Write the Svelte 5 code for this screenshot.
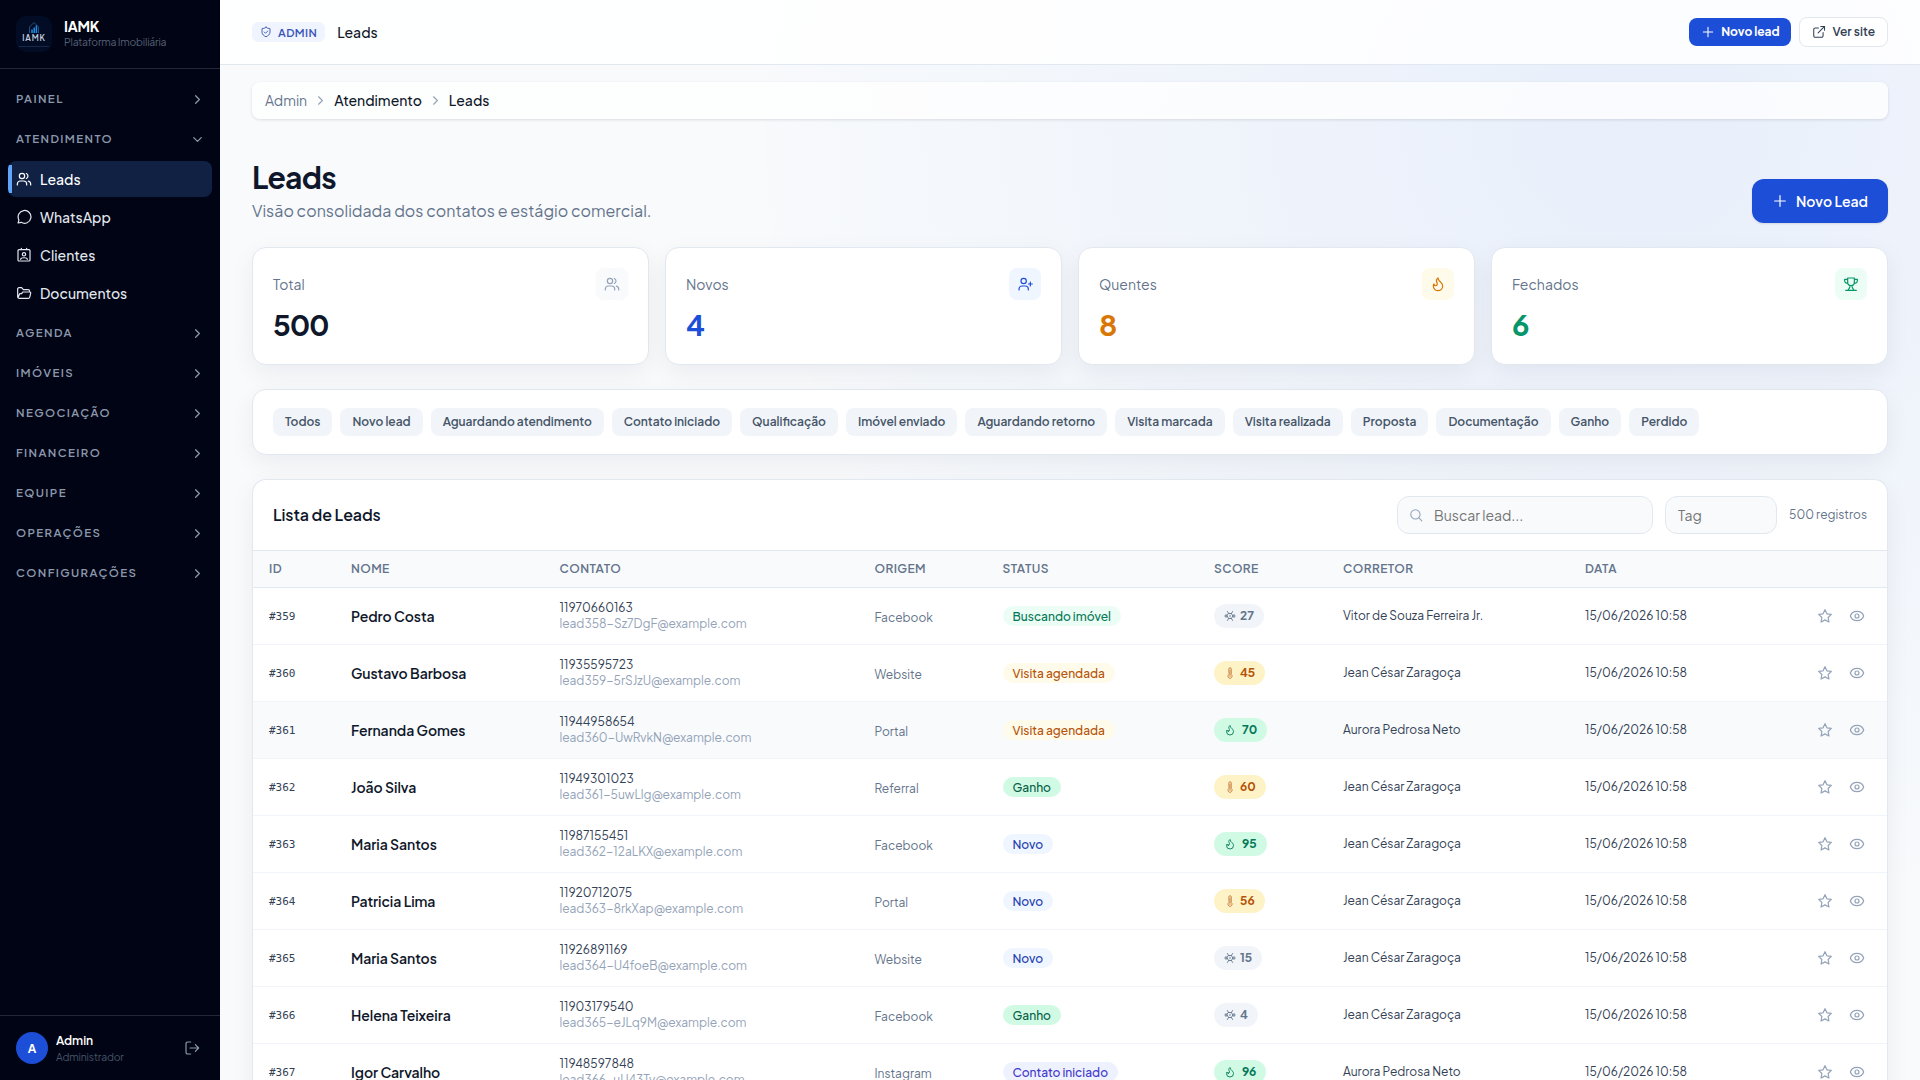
<script lang="ts">
	type Tone = 'cold' | 'warm' | 'hot';

	type Lead = {
		id: number;
		name: string;
		phone: string;
		email: string;
		origin: string;
		status: string;
		score: number;
		broker: string;
	};

	const navItems = [
		{ label: 'Leads', icon: 'users' },
		{ label: 'WhatsApp', icon: 'chat' },
		{ label: 'Clientes', icon: 'contact' },
		{ label: 'Documentos', icon: 'folder' }
	];

	const sections = ['Agenda', 'Imóveis', 'Negociação', 'Financeiro', 'Equipe', 'Operações', 'Configurações'];

	const stats = [
		{ label: 'Total', value: 500, icon: 'users', tone: 'slate' },
		{ label: 'Novos', value: 4, icon: 'userPlus', tone: 'blue' },
		{ label: 'Quentes', value: 8, icon: 'flame', tone: 'amber' },
		{ label: 'Fechados', value: 6, icon: 'trophy', tone: 'green' }
	];

	const filters = [
		'Todos',
		'Novo lead',
		'Aguardando atendimento',
		'Contato iniciado',
		'Qualificação',
		'Imóvel enviado',
		'Aguardando retorno',
		'Visita marcada',
		'Visita realizada',
		'Proposta',
		'Documentação',
		'Ganho',
		'Perdido'
	];

	const statusClass: Record<string, string> = {
		'Buscando imóvel': 'searching',
		'Visita agendada': 'visit',
		Ganho: 'won',
		Novo: 'new',
		'Contato iniciado': 'contacted'
	};

	const jean = 'Jean César Zaragoça';
	const aurora = 'Aurora Pedrosa Neto';

	const leads: Lead[] = [
		{ id: 359, name: 'Pedro Costa', phone: '11970660163', email: 'lead358-Sz7DgF@example.com', origin: 'Facebook', status: 'Buscando imóvel', score: 27, broker: 'Vitor de Souza Ferreira Jr.' },
		{ id: 360, name: 'Gustavo Barbosa', phone: '11935595723', email: 'lead359-5rSJzU@example.com', origin: 'Website', status: 'Visita agendada', score: 45, broker: jean },
		{ id: 361, name: 'Fernanda Gomes', phone: '11944958654', email: 'lead360-UwRvkN@example.com', origin: 'Portal', status: 'Visita agendada', score: 70, broker: aurora },
		{ id: 362, name: 'João Silva', phone: '11949301023', email: 'lead361-5uwLlg@example.com', origin: 'Referral', status: 'Ganho', score: 60, broker: jean },
		{ id: 363, name: 'Maria Santos', phone: '11987155451', email: 'lead362-12aLKX@example.com', origin: 'Facebook', status: 'Novo', score: 95, broker: jean },
		{ id: 364, name: 'Patricia Lima', phone: '11920712075', email: 'lead363-8rkXap@example.com', origin: 'Portal', status: 'Novo', score: 56, broker: jean },
		{ id: 365, name: 'Maria Santos', phone: '11926891169', email: 'lead364-U4foeB@example.com', origin: 'Website', status: 'Novo', score: 15, broker: jean },
		{ id: 366, name: 'Helena Teixeira', phone: '11903179540', email: 'lead365-eJLq9M@example.com', origin: 'Facebook', status: 'Ganho', score: 4, broker: jean },
		{ id: 367, name: 'Igor Carvalho', phone: '11948597848', email: 'lead366-uU43Tv@example.com', origin: 'Instagram', status: 'Contato iniciado', score: 96, broker: aurora }
	];

	let search = $state('');
	let tag = $state('');
	let highlighted = $state(361);

	function tone(score: number): Tone {
		if (score >= 70) return 'hot';
		return score >= 40 ? 'warm' : 'cold';
	}

	const toneIcon: Record<Tone, string> = { cold: 'snow', warm: 'thermometer', hot: 'flame' };

	// Stroke paths on a 24x24 grid.
	const icons: Record<string, string> = {
		users: 'M9 3.5a4 4 0 1 0 0 8a4 4 0 0 0 0-8zM2 21v-1.5A4.5 4.5 0 0 1 6.5 15h5A4.5 4.5 0 0 1 16 19.5V21M15.5 3.8a4 4 0 0 1 0 7.4M18.5 15.2a4.5 4.5 0 0 1 3.5 4.3V21',
		userPlus: 'M10 3.5a4 4 0 1 0 0 8a4 4 0 0 0 0-8zM3 21v-1.5A4.5 4.5 0 0 1 7.5 15h5A4.5 4.5 0 0 1 17 19.5V21M20 9v6M17 12h6',
		chat: 'M3.2 21l1.2-4.6A9.6 9.6 0 1 1 7.8 20z',
		contact: 'M4.5 4h15A1.5 1.5 0 0 1 21 5.5v14a1.5 1.5 0 0 1-1.5 1.5h-15A1.5 1.5 0 0 1 3 19.5v-14A1.5 1.5 0 0 1 4.5 4zM8 2v2M16 2v2M12 8.5a2.5 2.5 0 1 0 0 5a2.5 2.5 0 0 0 0-5zM7 18.5c0-3.2 10-3.2 10 0',
		folder: 'M5 20h13.5a2 2 0 0 0 2-1.5L22 12.5a1.5 1.5 0 0 0-1.5-2H10L8.5 13H5.5L3 19M5 20a2.5 2.5 0 0 1-2.5-2.5V6A2 2 0 0 1 4.5 4h4L11 7h7a2.5 2.5 0 0 1 2.5 2.5v1',
		flame: 'M8.5 14.5A2.5 2.5 0 0 0 11 12c0-1.38-.5-2-1-3-1.07-2.14-.22-4.05 2-6 .5 2.5 2 4.9 4 6.5s3 3.5 3 5.5a7 7 0 1 1-14 0c0-1.15.43-2.29 1-3a2.5 2.5 0 0 0 2.5 2.5z',
		trophy: 'M7 3h10v6.5a5 5 0 0 1-10 0zM7 5H2.5v2.5A3.5 3.5 0 0 0 7 10.5M17 5h4.5v2.5a3.5 3.5 0 0 1-4.5 3M10.5 14.5C10.5 18 9 19 7.5 21M13.5 14.5C13.5 18 15 19 16.5 21M4 21.5h16',
		snow: 'M1.5 12h5M17.500 12h5M6.8 3l2.400 4M14.800 17l2.400 4M17.2 3l-2.400 4M9.200 17l-2.400 4M9.2 7h5.6l2.9 5l-2.9 5H9.2L6.3 12zM12 10.500v3M4 9v6M20 9v6',
		thermometer: 'M9.5 4a2.5 2.5 0 0 1 5 0v11a4.2 4.2 0 1 1-5 0zM12 6v10M12 17.5v1.5',
		shield: 'M12 2.5c2.5 2 5 2.5 8 2.8V12c0 5-4 8-8 9.5C8 20 4 17 4 12V5.3c3-.3 5.5-.8 8-2.8zM8.5 12l2.5 2.5l4.5-4.5',
		plus: 'M12 4v16M4 12h16',
		external: 'M11 5H5.5A2.5 2.5 0 0 0 3 7.5v11A2.5 2.5 0 0 0 5.5 21h11a2.5 2.5 0 0 0 2.5-2.5V13M15 2.5h6.5V9M21.5 2.5L10.5 13.5',
		right: 'M9 6l6 6l-6 6',
		down: 'M6 9l6 6l6-6',
		search: 'M11 3a8 8 0 1 0 0 16a8 8 0 0 0 0-16zM17 17l5 5',
		star: 'M12 2.5l2.9 6.2l6.6.9l-4.8 4.7l1.2 6.7L12 17.8L6.1 21l1.2-6.7L2.5 9.6l6.6-.9z',
		eye: 'M2 12C3.5 7.5 7.5 5 12 5s8.5 2.5 10 7c-1.5 4.5-5.5 7-10 7S3.5 16.5 2 12zM12 9a3 3 0 1 0 0 6a3 3 0 0 0 0-6z',
		logout: 'M10 3H5.5A2.5 2.5 0 0 0 3 5.5v13A2.5 2.5 0 0 0 5.5 21H10M9 12h12.5M17 7l5 5l-5 5'
	};
</script>

{#snippet icon(name: string, size = 16, stroke = 1.8)}
	<svg
		width={size}
		height={size}
		viewBox="0 0 24 24"
		fill="none"
		stroke="currentColor"
		stroke-width={stroke}
		stroke-linecap="round"
		stroke-linejoin="round"
		aria-hidden="true"
	>
		<path d={icons[name]} />
	</svg>
{/snippet}

<div class="app">
	<aside class="sidebar">
		<div class="brand">
			<div class="logo">
				<svg width="14" height="13" viewBox="0 0 14 13" aria-hidden="true">
					<path d="M2.5 12V6L7 1.5L11.5 6V12" fill="none" stroke="#24568c" stroke-width="0.9" />
					<path d="M5 12V8.5M7.2 12V6.5M9.4 12V4.5" stroke="#1d8fe8" stroke-width="1.5" />
				</svg>
				<span class="logo-name">IAMK</span>
				<span class="logo-line"></span>
			</div>
			<div class="brand-text">
				<strong>IAMK</strong>
				<span>Plataforma Imobiliária</span>
			</div>
		</div>

		<nav class="nav">
			<button class="section" type="button"><span>Painel</span>{@render icon('right', 15, 2)}</button>
			<button class="section" type="button"><span>Atendimento</span>{@render icon('down', 15, 2)}</button>
			<div class="nav-group">
				{#each navItems as item, i}
					<a class="nav-item" class:active={i === 0} href="#{item.icon}">
						{@render icon(item.icon, 16)}
						<span>{item.label}</span>
					</a>
				{/each}
			</div>
			{#each sections as section}
				<button class="section" type="button"><span>{section}</span>{@render icon('right', 15, 2)}</button>
			{/each}
		</nav>

		<div class="account">
			<div class="avatar">A</div>
			<div class="account-text">
				<strong>Admin</strong>
				<span>Administrador</span>
			</div>
			<button class="logout" type="button" aria-label="Sair">{@render icon('logout', 16)}</button>
		</div>
	</aside>

	<div class="page">
		<header class="topbar">
			<span class="role">{@render icon('shield', 12)}<span>ADMIN</span></span>
			<span class="topbar-title">Leads</span>
			<div class="topbar-actions">
				<button class="btn-new-small" type="button">{@render icon('plus', 14)}<span>Novo lead</span></button>
				<a class="btn-site" href="#site">{@render icon('external', 14)}<span>Ver site</span></a>
			</div>
		</header>

		<main class="content">
			<nav class="breadcrumb" aria-label="Breadcrumb">
				<span class="muted">Admin</span>
				{@render icon('right', 15)}
				<span>Atendimento</span>
				{@render icon('right', 15)}
				<span>Leads</span>
			</nav>

			<div class="heading">
				<div>
					<h1>Leads</h1>
					<p>Visão consolidada dos contatos e estágio comercial.</p>
				</div>
				<button class="btn-new" type="button">{@render icon('plus', 16)}<span>Novo Lead</span></button>
			</div>

			<div class="stats">
				{#each stats as stat}
					<div class="card stat {stat.tone}">
						<div class="stat-top">
							<span class="stat-label">{stat.label}</span>
							<span class="stat-icon">{@render icon(stat.icon, 16)}</span>
						</div>
						<div class="stat-value">{stat.value}</div>
					</div>
				{/each}
			</div>

			<div class="card filters">
				{#each filters as filter}
					<button class="chip" type="button">{filter}</button>
				{/each}
			</div>

			<section class="card list">
				<div class="list-header">
					<h2>Lista de Leads</h2>
					<label class="field search">
						{@render icon('search', 14)}
						<input bind:value={search} placeholder="Buscar lead..." />
					</label>
					<label class="field tag">
						<input bind:value={tag} placeholder="Tag" />
					</label>
					<span class="count">500 registros</span>
				</div>

				<table>
					<colgroup>
						<col class="c-id" />
						<col class="c-name" />
						<col class="c-contact" />
						<col class="c-origin" />
						<col class="c-status" />
						<col class="c-score" />
						<col class="c-broker" />
						<col class="c-date" />
						<col />
					</colgroup>
					<thead>
						<tr>
							<th>ID</th>
							<th>Nome</th>
							<th>Contato</th>
							<th>Origem</th>
							<th>Status</th>
							<th>Score</th>
							<th>Corretor</th>
							<th>Data</th>
							<th></th>
						</tr>
					</thead>
					<tbody>
						{#each leads as lead (lead.id)}
							<tr class:hover={lead.id === highlighted} onmouseenter={() => (highlighted = lead.id)}>
								<td class="id">#{lead.id}</td>
								<td class="name">{lead.name}</td>
								<td>
									<div class="phone">{lead.phone}</div>
									<div class="email">{lead.email}</div>
								</td>
								<td class="origin">{lead.origin}</td>
								<td><span class="status {statusClass[lead.status]}">{lead.status}</span></td>
								<td>
									<span class="score {tone(lead.score)}">
										{@render icon(toneIcon[tone(lead.score)], 12)}
										<span>{lead.score}</span>
									</span>
								</td>
								<td class="broker">{lead.broker}</td>
								<td class="date">15/06/2026 10:58</td>
								<td>
									<div class="row-actions">
										<button type="button" aria-label="Favoritar">{@render icon('star', 16)}</button>
										<button type="button" aria-label="Ver lead">{@render icon('eye', 16)}</button>
									</div>
								</td>
							</tr>
						{/each}
					</tbody>
				</table>
			</section>
		</main>
	</div>
</div>

<style>
	:global(body) {
		margin: 0;
		background: #f8fafc;
	}

	.app {
		display: grid;
		grid-template-columns: 220px minmax(0, 1fr);
		grid-template-rows: 100vh;
		height: 100vh;
		overflow: hidden;
		font-family: 'Plus Jakarta Sans', Inter, 'Open Sans', sans-serif;
		font-size: 14px;
		color: #0f172a;
		background:
			radial-gradient(ellipse 900px 800px at 1640px 130px, rgba(37, 99, 235, 0.075), transparent),
			#f8fafc;
	}

	.app * {
		box-sizing: border-box;
	}

	button {
		font: inherit;
		border: 0;
		padding: 0;
		background: none;
		cursor: pointer;
	}

	a {
		text-decoration: none;
	}

	svg {
		display: block;
		flex: none;
	}

	/* Sidebar */
	.sidebar {
		display: flex;
		flex-direction: column;
		background: #010414;
		color: #fff;
	}

	.brand {
		display: flex;
		align-items: center;
		gap: 12px;
		height: 69px;
		padding: 0 16px;
		border-bottom: 1px solid #232736;
	}

	.logo {
		display: flex;
		flex-direction: column;
		align-items: center;
		width: 36px;
		height: 36px;
		padding-top: 5px;
		border-radius: 10px;
		background: #020c24;
	}

	.logo-name {
		font-size: 8px;
		line-height: 8px;
		font-weight: 600;
		letter-spacing: 0.8px;
		color: #c3cddb;
	}

	.logo-line {
		width: 30px;
		height: 1px;
		margin-top: 4px;
		background: #15294a;
	}

	.brand-text,
	.account-text {
		display: flex;
		flex-direction: column;
	}

	.brand-text {
		padding-bottom: 1px;
	}

	.brand-text strong {
		font-size: 14px;
		line-height: 17px;
		font-weight: 700;
		letter-spacing: -0.2px;
	}

	.brand-text span {
		font-size: 10.4px;
		line-height: 14px;
		letter-spacing: -0.2px;
		color: #566176;
	}

	.nav {
		flex: 1;
		padding: 10px 8px 0;
	}

	.section {
		display: flex;
		align-items: center;
		justify-content: space-between;
		width: 100%;
		height: 40px;
		padding: 0 7px 0 8px;
		font-size: 11.5px;
		font-weight: 600;
		letter-spacing: 0.12em;
		text-transform: uppercase;
		color: #8b98ac;
	}

	.section span {
		padding-bottom: 2px;
	}

	.nav-group {
		display: flex;
		flex-direction: column;
		gap: 2px;
		padding: 2px 0;
	}

	.nav-item {
		display: flex;
		align-items: center;
		gap: 8px;
		height: 36px;
		padding: 0 8px;
		border-radius: 8px;
		font-weight: 500;
		color: #e2e8f0;
	}

	.nav-item.active {
		color: #fff;
		background: linear-gradient(90deg, #60a5fa 4px, transparent 4px) 0 4px / 4px 28px no-repeat, #102144;
	}

	.account {
		display: flex;
		align-items: center;
		gap: 8px;
		height: 65px;
		padding: 0 20px 0 16px;
		border-top: 1px solid #232736;
	}

	.avatar {
		display: grid;
		place-items: center;
		width: 32px;
		height: 32px;
		border-radius: 50%;
		background: #1d4ed8;
		font-size: 12px;
		font-weight: 700;
	}

	.account-text {
		flex: 1;
	}

	.account-text strong {
		font-size: 12px;
		line-height: 16px;
		font-weight: 600;
	}

	.account-text span {
		font-size: 10.4px;
		line-height: 15px;
		letter-spacing: -0.15px;
		color: #475569;
	}

	.logout {
		color: #8b98ac;
	}

	/* Topbar */
	.page {
		min-width: 0;
	}

	.topbar {
		display: flex;
		align-items: center;
		height: 65px;
		padding: 0 32px;
		border-bottom: 1px solid #e2e8f0;
		background: rgba(255, 255, 255, 0.85);
	}

	.role {
		display: flex;
		align-items: center;
		gap: 6px;
		height: 20px;
		padding: 0 8px;
		border-radius: 6px;
		font-size: 11.2px;
		line-height: 18px;
		font-weight: 600;
		letter-spacing: 0.4px;
		color: #3b55b8;
		background: #eff4ff;
	}

	.topbar-title {
		margin-left: 12px;
		font-weight: 500;
	}

	.topbar-actions {
		display: flex;
		align-items: center;
		gap: 8px;
		margin-left: auto;
	}

	.btn-new-small,
	.btn-site {
		display: flex;
		align-items: center;
		gap: 6px;
		border-radius: 8px;
		font-size: 12px;
		line-height: 26px;
		font-weight: 600;
	}

	.btn-new-small {
		height: 28px;
		padding: 0 12px;
		font-weight: 700;
		letter-spacing: -0.05px;
		color: #fff;
		background: #1d4ed8;
	}

	.btn-site {
		height: 30px;
		padding: 0 12px;
		border: 1px solid #e2e8f0;
		color: #334155;
		background: #fff;
	}

	/* Content */
	.content {
		padding: 17px 32px 0;
	}

	.breadcrumb {
		display: flex;
		align-items: center;
		gap: 6px;
		height: 37px;
		padding: 0 13px 1px;
		border-radius: 8px;
		font-weight: 500;
		background: rgba(255, 255, 255, 0.75);
		box-shadow: 0 1px 3px rgba(15, 23, 42, 0.12);
	}

	.breadcrumb svg {
		color: #94a3b8;
	}

	.breadcrumb .muted {
		font-weight: 400;
		color: #64748b;
	}

	.heading {
		display: flex;
		justify-content: space-between;
		align-items: flex-end;
		margin: 38px 0 24px;
	}

	h1 {
		margin: 0 0 2px;
		font-size: 30px;
		line-height: 40px;
		font-weight: 700;
		letter-spacing: -0.025em;
	}

	.heading p {
		margin: 0;
		font-size: 16px;
		line-height: 24px;
		color: #64748b;
	}

	.btn-new {
		display: flex;
		align-items: center;
		gap: 8px;
		height: 44px;
		padding: 0 20px;
		border-radius: 12px;
		font-weight: 600;
		color: #fff;
		background: #1d4ed8;
		box-shadow: 0 1px 2px rgba(15, 23, 42, 0.12);
	}

	.card {
		border: 1px solid #e2e8f0;
		border-radius: 14px;
		background: #fff;
		box-shadow: 0 8px 24px rgba(15, 23, 42, 0.06);
	}

	.stats {
		display: grid;
		grid-template-columns: repeat(4, 1fr);
		gap: 16px;
		margin-bottom: 24px;
	}

	.stat {
		height: 118px;
		padding: 20px;
	}

	.stat-top {
		display: flex;
		align-items: center;
		justify-content: space-between;
	}

	.stat-label {
		color: #64748b;
	}

	.stat-icon {
		display: grid;
		place-items: center;
		width: 32px;
		height: 32px;
		border-radius: 8px;
	}

	.stat-value {
		margin-top: 5px;
		font-size: 29px;
		line-height: 38px;
		font-weight: 700;
		letter-spacing: -1.2px;
	}

	.slate .stat-icon { color: #94a3b8; background: #f8fafc; }
	.blue .stat-value { color: #1d4ed8; }
	.blue .stat-icon { color: #1d4ed8; background: #eff6ff; }
	.amber .stat-value { color: #d97706; }
	.amber .stat-icon { color: #d97706; background: #fffbeb; }
	.green .stat-value { color: #059669; }
	.green .stat-icon { color: #059669; background: #ecfdf5; }

	.filters {
		display: flex;
		gap: 8px;
		height: 66px;
		padding: 18px 20px;
		margin-bottom: 24px;
	}

	.chip {
		height: 28px;
		padding: 0 12px;
		border-radius: 8px;
		font-size: 12px;
		line-height: 26px;
		font-weight: 600;
		white-space: nowrap;
		color: #475569;
		background: #f1f5f9;
	}

	.list {
		overflow: hidden;
		border-radius: 14px 14px 0 0;
		border-bottom: 0;
	}

	.list-header {
		display: flex;
		align-items: center;
		gap: 12px;
		height: 71px;
		padding: 0 20px;
		border-bottom: 1px solid #e2e8f0;
	}

	h2 {
		flex: 1;
		margin: 0;
		padding-bottom: 1px;
		font-size: 16px;
		font-weight: 600;
		letter-spacing: -0.1px;
	}

	.field {
		display: flex;
		align-items: center;
		gap: 11px;
		height: 38px;
		padding: 0 12px;
		border: 1px solid #e2e8f0;
		border-radius: 12px;
		color: #94a3b8;
		background: #f8fafc;
	}

	.search {
		width: 256px;
		padding-left: 11px;
	}

	.tag {
		width: 112px;
	}

	.field input {
		width: 100%;
		min-width: 0;
		padding: 0;
		border: 0;
		outline: 0;
		font: inherit;
		color: #0f172a;
		background: none;
	}

	.field input::placeholder {
		color: #757575;
	}

	.count {
		padding-bottom: 1px;
		font-size: 12px;
		color: #64748b;
	}

	/* Table */
	table {
		width: 100%;
		table-layout: fixed;
		border-collapse: separate;
		border-spacing: 0;
	}

	.c-id { width: 82px; }
	.c-name { width: 208.5px; }
	.c-contact { width: 315px; }
	.c-origin { width: 128px; }
	.c-status { width: 211.5px; }
	.c-score { width: 129px; }
	.c-broker { width: 242px; }
	.c-date { width: 170px; }

	th {
		height: 37px;
		padding: 0 16px 1px;
		border-bottom: 1px solid #e2e8f0;
		text-align: left;
		text-transform: uppercase;
		font-size: 12px;
		font-weight: 600;
		letter-spacing: 0.4px;
		color: #64748b;
		background: #f8fafc;
	}

	td {
		height: 57px;
		padding: 0 16px;
		border-bottom: 1px solid #f1f5f9;
		white-space: nowrap;
	}

	tr.hover td {
		background: #f8fafc;
	}

	.id {
		font-family: 'DejaVu Sans Mono', monospace;
		font-size: 11px;
		color: #334155;
	}

	.name {
		font-weight: 600;
		letter-spacing: -0.05px;
	}

	.phone,
	.email {
		font-size: 12px;
		line-height: 16px;
	}

	.phone {
		color: #334155;
	}

	.email {
		color: #94a3b8;
	}

	.origin {
		padding-top: 2px;
		font-size: 12px;
		color: #64748b;
	}

	.status {
		display: inline-flex;
		align-items: center;
		height: 20px;
		padding: 0 10px;
		border-radius: 10px;
		font-size: 12px;
		font-weight: 500;
	}

	.searching { color: #047857; background: #ecfdf5; }
	.visit { color: #b45309; background: #fffbeb; }
	.won { color: #065f46; background: #d1fae5; }
	.new { color: #1e40af; background: #eff6ff; }
	.contacted { color: #4338ca; background: #eef2ff; }

	.score {
		display: inline-flex;
		align-items: center;
		gap: 4px;
		height: 24px;
		padding: 0 10px;
		border-radius: 12px;
		font-size: 12px;
		line-height: 22px;
		font-weight: 700;
	}

	.cold { color: #64748b; background: #f1f5f9; }
	.warm { color: #b45309; background: #fef3c7; }
	.hot { gap: 6px; color: #047857; background: #d1fae5; }

	.warm svg {
		opacity: 0.75;
	}

	.broker,
	.date {
		padding-bottom: 1px;
		font-size: 12px;
		color: #334155;
	}

	.row-actions {
		display: flex;
		justify-content: flex-end;
		gap: 16px;
		padding-right: 6px;
	}

	.row-actions button {
		color: #94a3b8;
	}
</style>
